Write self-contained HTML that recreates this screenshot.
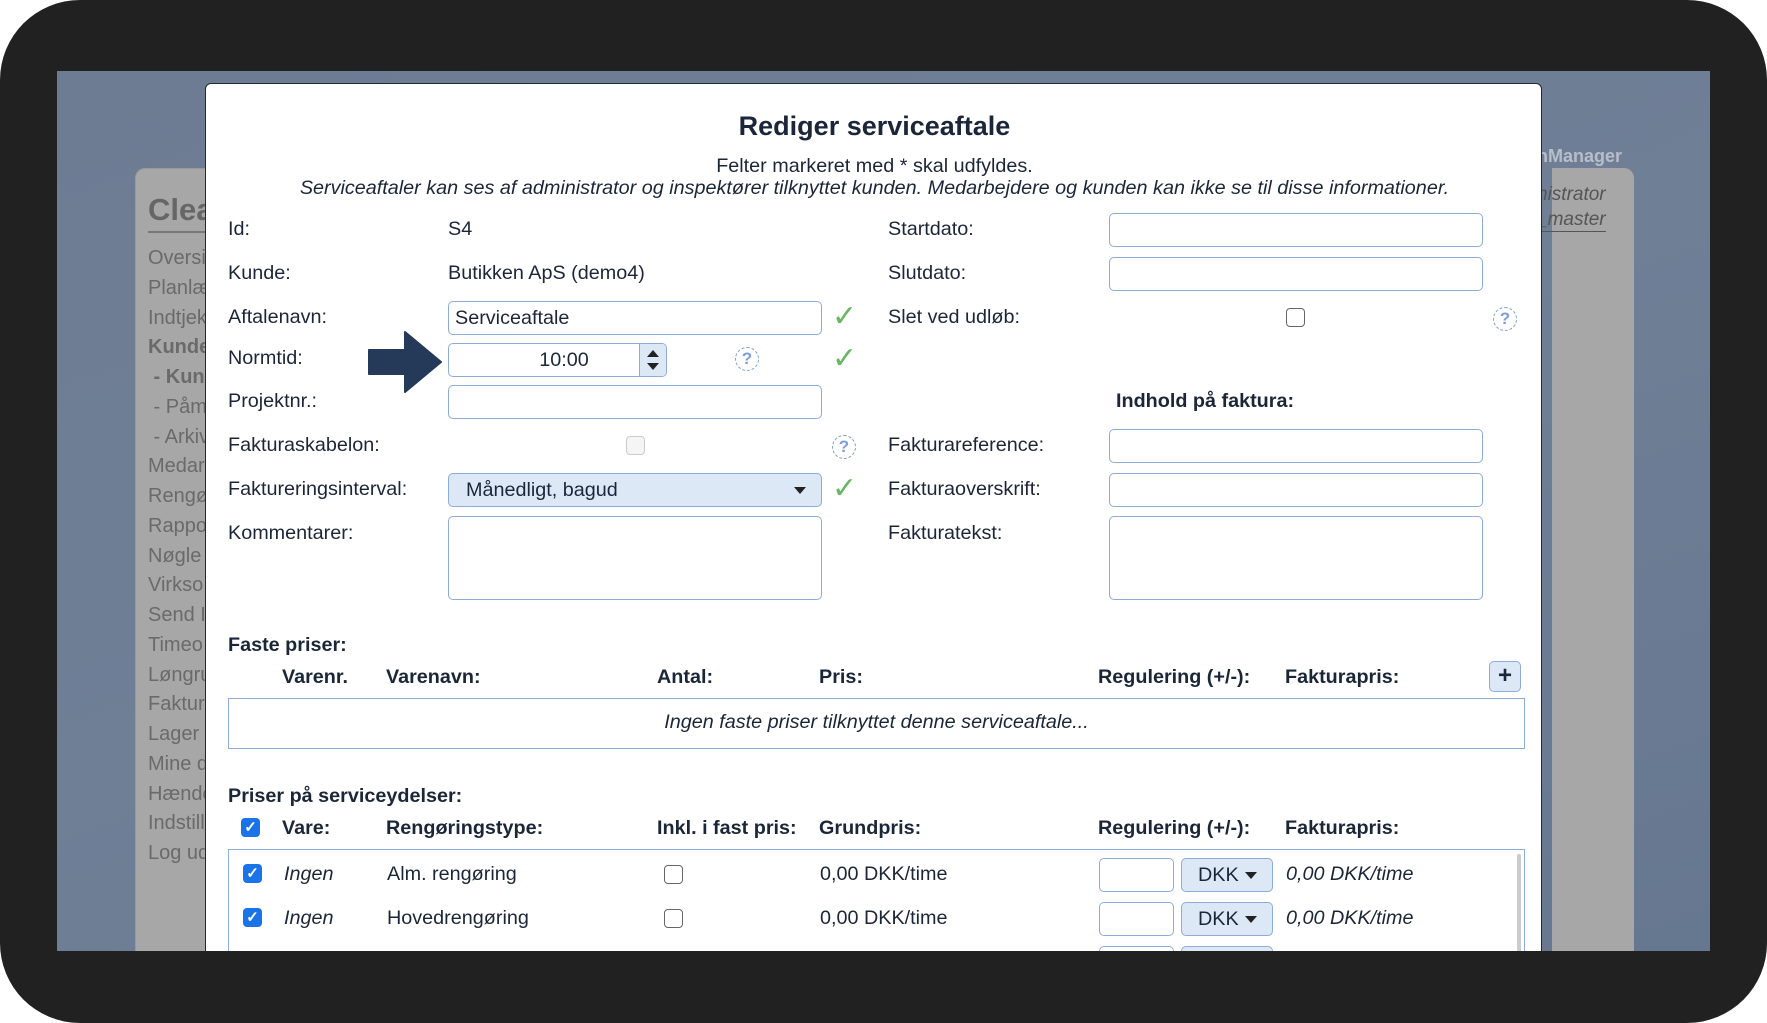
<!DOCTYPE html>
<html><head><meta charset="utf-8"><style>
*{box-sizing:border-box;margin:0;padding:0}
body{width:1767px;height:1023px;background:#fff;font-family:"Liberation Sans",Arial,sans-serif;overflow:hidden;position:relative}
.frame{position:absolute;left:0;top:0;width:1767px;height:1023px;background:#212121;border-radius:80px}
.screen{position:absolute;left:57px;top:71px;width:1653px;height:880px;overflow:hidden;background:linear-gradient(160deg,#6d7c93 0%,#6f7f96 50%,#667790 100%)}
.a{position:absolute;white-space:nowrap}
.lp{position:absolute;left:78px;top:97px;width:300px;height:900px;background:#a7a7a7;border-radius:10px 0 0 0;border:1px solid #999}
.rp{position:absolute;left:1495px;top:97px;width:82px;height:900px;background:#a7a7a7;border-radius:0 10px 0 0}
.menu{position:absolute;left:91px;color:#6a6a6a;font-size:20px}
.modal{position:absolute;left:148px;top:12px;width:1337px;height:900px;background:#fff;border:1px solid #1d2a3a;border-radius:6px 6px 0 0;color:#1b2638;font-size:19.8px}
.t{position:absolute;white-space:nowrap}
.b{font-weight:bold}
.inp{position:absolute;border:1.5px solid #8eacd9;border-radius:5px;background:#fff;height:34px}
.chk{position:absolute;color:#6bb563;font-size:30px;line-height:30px}
.help{position:absolute;width:24px;height:24px;border:1.5px dashed #7e9fd6;border-radius:50%;color:#7e9fd6;font-size:17px;font-weight:bold;text-align:center;line-height:21px}
.cb{position:absolute;width:19px;height:19px;border:1.5px solid #666;border-radius:4px;background:#fff}
.cbb{position:absolute;width:19px;height:19px;border-radius:4px;background:#1a73e8;color:#fff;font-size:15px;font-weight:bold;text-align:center;line-height:19px}
.btn{position:absolute;border:1.5px solid #8eacd9;border-radius:5px;background:#dde8f6;height:34px}
</style></head><body>
<div class="frame"></div>
<div class="screen">
  <div class="lp"></div>
  <div class="rp"></div>
  <div class="a" style="left:91px;top:121px;font-size:31px;font-weight:bold;color:#666">Clea</div>
  <div class="a" style="left:91px;top:160px;width:60px;border-top:2px solid #777"></div>
  <div class="menu" style="top:176px">Oversi</div>
  <div class="menu" style="top:206px">Planlæ</div>
  <div class="menu" style="top:236px">Indtjek</div>
  <div class="menu" style="top:265px;font-weight:bold">Kunde</div>
  <div class="menu" style="top:295px;font-weight:bold">&nbsp;- Kun</div>
  <div class="menu" style="top:325px">&nbsp;- Påm</div>
  <div class="menu" style="top:355px">&nbsp;- Arkiv</div>
  <div class="menu" style="top:384px">Medar</div>
  <div class="menu" style="top:414px">Rengø</div>
  <div class="menu" style="top:444px">Rappo</div>
  <div class="menu" style="top:474px">Nøgle</div>
  <div class="menu" style="top:503px">Virkso</div>
  <div class="menu" style="top:533px">Send I</div>
  <div class="menu" style="top:563px">Timeo</div>
  <div class="menu" style="top:593px">Løngru</div>
  <div class="menu" style="top:622px">Faktur</div>
  <div class="menu" style="top:652px">Lager</div>
  <div class="menu" style="top:682px">Mine d</div>
  <div class="menu" style="top:712px">Hænde</div>
  <div class="menu" style="top:741px">Indstill</div>
  <div class="menu" style="top:771px">Log ud</div>
  <div class="a" style="left:1480px;top:75px;font-size:18px;font-weight:bold;color:#b8bec8">nManager</div>
  <div class="a" style="left:1480px;top:113px;font-size:19px;font-style:italic;color:#555">nistrator</div>
  <div class="a" style="left:1480px;top:138px;font-size:19px;font-style:italic;color:#555;border-bottom:1px solid #555">_master</div>

  <div class="modal">
    <div class="t b" style="left:0;width:1337px;text-align:center;top:27px;font-size:27px">Rediger serviceaftale</div>
    <div class="t" style="left:0;width:1337px;text-align:center;top:71px">Felter markeret med * skal udfyldes.</div>
    <div class="t" style="left:0;width:1337px;text-align:center;top:93px;font-style:italic">Serviceaftaler kan ses af administrator og inspektører tilknyttet kunden. Medarbejdere og kunden kan ikke se til disse informationer.</div>

    <div class="t" style="left:22px;top:134px">Id:</div>
    <div class="t" style="left:242px;top:134px">S4</div>
    <div class="t" style="left:22px;top:178px">Kunde:</div>
    <div class="t" style="left:242px;top:178px">Butikken ApS (demo4)</div>
    <div class="t" style="left:22px;top:222px">Aftalenavn:</div>
    <div class="inp" style="left:242px;top:217px;width:374px"><span class="t" style="left:6px;top:5px">Serviceaftale</span></div>
    <div class="chk" style="left:626px;top:218px">✓</div>
    <div class="t" style="left:22px;top:263px">Normtid:</div>
    <div class="inp" style="left:242px;top:259px;width:219px;overflow:hidden"><span class="t" style="left:0;width:230px;text-align:center;top:5px">10:00</span>
      <div style="position:absolute;right:0;top:0;width:27px;height:34px;background:#dde8f6;border-left:1px solid #8eacd9"><div style="position:absolute;left:7px;top:6px;border:6px solid transparent;border-bottom:7px solid #222;border-top:0"></div><div style="position:absolute;left:7px;top:19px;border:6px solid transparent;border-top:7px solid #222;border-bottom:0"></div></div></div>
    <div class="help" style="left:529px;top:263px">?</div>
    <div class="chk" style="left:626px;top:260px">✓</div>
    <svg style="position:absolute;left:161px;top:246px" width="76" height="64" viewBox="0 0 76 64"><path d="M2 20 H38 V2 L74 32 L38 62 V44 H2 Z" fill="#243a58" stroke="#243a58" stroke-width="2" stroke-linejoin="round"/></svg>
    <div class="t" style="left:22px;top:306px">Projektnr.:</div>
    <div class="inp" style="left:242px;top:301px;width:374px"></div>
    <div class="t" style="left:22px;top:350px">Fakturaskabelon:</div>
    <div class="cb" style="left:420px;top:352px;border-color:#ccc;background:#f5f5f5"></div>
    <div class="help" style="left:626px;top:351px">?</div>
    <div class="t" style="left:22px;top:394px">Faktureringsinterval:</div>
    <div class="btn" style="left:242px;top:389px;width:374px"><span class="t" style="left:17px;top:5px">Månedligt, bagud</span><div style="position:absolute;right:15px;top:13px;border:6px solid transparent;border-top:7px solid #222;border-bottom:0"></div></div>
    <div class="chk" style="left:626px;top:390px">✓</div>
    <div class="t" style="left:22px;top:438px">Kommentarer:</div>
    <div class="inp" style="left:242px;top:432px;width:374px;height:84px"></div>

    <div class="t" style="left:682px;top:134px">Startdato:</div>
    <div class="inp" style="left:903px;top:129px;width:374px"></div>
    <div class="t" style="left:682px;top:178px">Slutdato:</div>
    <div class="inp" style="left:903px;top:173px;width:374px"></div>
    <div class="t" style="left:682px;top:222px">Slet ved udløb:</div>
    <div class="cb" style="left:1080px;top:224px"></div>
    <div class="help" style="left:1287px;top:223px">?</div>
    <div class="t b" style="left:910px;top:306px">Indhold på faktura:</div>
    <div class="t" style="left:682px;top:350px">Fakturareference:</div>
    <div class="inp" style="left:903px;top:345px;width:374px"></div>
    <div class="t" style="left:682px;top:394px">Fakturaoverskrift:</div>
    <div class="inp" style="left:903px;top:389px;width:374px"></div>
    <div class="t" style="left:682px;top:438px">Fakturatekst:</div>
    <div class="inp" style="left:903px;top:432px;width:374px;height:84px"></div>

    <div class="t b" style="left:22px;top:550px">Faste priser:</div>
    <div class="t b" style="left:76px;top:582px">Varenr.</div>
    <div class="t b" style="left:180px;top:582px">Varenavn:</div>
    <div class="t b" style="left:451px;top:582px">Antal:</div>
    <div class="t b" style="left:613px;top:582px">Pris:</div>
    <div class="t b" style="left:892px;top:582px">Regulering (+/-):</div>
    <div class="t b" style="left:1079px;top:582px">Fakturapris:</div>
    <div class="btn" style="left:1283px;top:577px;width:32px;height:31px;text-align:center;font-size:24px;font-weight:bold;line-height:28px;color:#1b2638">+</div>
    <div style="position:absolute;left:22px;top:614px;width:1297px;height:51px;border:1.5px solid #8eacd9"></div>
    <div class="t" style="left:22px;width:1297px;text-align:center;top:627px;font-style:italic">Ingen faste priser tilknyttet denne serviceaftale...</div>

    <div class="t b" style="left:22px;top:701px">Priser på serviceydelser:</div>
    <div class="cbb" style="left:35px;top:734px">✓</div>
    <div class="t b" style="left:76px;top:733px">Vare:</div>
    <div class="t b" style="left:180px;top:733px">Rengøringstype:</div>
    <div class="t b" style="left:451px;top:733px">Inkl. i fast pris:</div>
    <div class="t b" style="left:613px;top:733px">Grundpris:</div>
    <div class="t b" style="left:892px;top:733px">Regulering (+/-):</div>
    <div class="t b" style="left:1079px;top:733px">Fakturapris:</div>
    <div style="position:absolute;left:22px;top:765px;width:1297px;height:200px;border:1.5px solid #8eacd9;border-bottom:0"></div>
    <div style="position:absolute;left:1311px;top:770px;width:4px;height:150px;background:#ccc;border-radius:2px"></div>

    <div class="cbb" style="left:37px;top:780px">✓</div>
    <div class="t" style="left:78px;top:779px;font-style:italic">Ingen</div>
    <div class="t" style="left:181px;top:779px">Alm. rengøring</div>
    <div class="cb" style="left:458px;top:781px"></div>
    <div class="t" style="left:614px;top:779px">0,00 DKK/time</div>
    <div class="inp" style="left:893px;top:774px;width:75px"></div>
    <div class="btn" style="left:975px;top:774px;width:92px"><span class="t" style="left:16px;top:5px">DKK</span><div style="position:absolute;left:63px;top:13px;border:6px solid transparent;border-top:7px solid #222;border-bottom:0"></div></div>
    <div class="t" style="left:1080px;top:779px;font-style:italic">0,00 DKK/time</div>

    <div class="cbb" style="left:37px;top:824px">✓</div>
    <div class="t" style="left:78px;top:823px;font-style:italic">Ingen</div>
    <div class="t" style="left:181px;top:823px">Hovedrengøring</div>
    <div class="cb" style="left:458px;top:825px"></div>
    <div class="t" style="left:614px;top:823px">0,00 DKK/time</div>
    <div class="inp" style="left:893px;top:818px;width:75px"></div>
    <div class="btn" style="left:975px;top:818px;width:92px"><span class="t" style="left:16px;top:5px">DKK</span><div style="position:absolute;left:63px;top:13px;border:6px solid transparent;border-top:7px solid #222;border-bottom:0"></div></div>
    <div class="t" style="left:1080px;top:823px;font-style:italic">0,00 DKK/time</div>
    <div class="inp" style="left:893px;top:862px;width:75px"></div>
    <div class="btn" style="left:975px;top:862px;width:92px"></div>
  </div>
</div>
</body></html>
